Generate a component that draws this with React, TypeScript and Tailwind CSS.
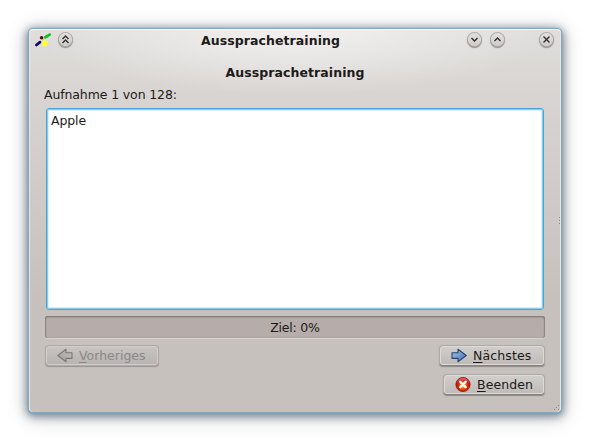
import type { ReactNode } from "react";

function RoundButton({ children, label }: { children: ReactNode; label: string }) {
  return (
    <button
      aria-label={label}
      className="flex size-[13px] shrink-0 items-center justify-center rounded-full bg-linear-to-b from-[#e3e1df] to-[#cfccc9] shadow-[0_0_0_1px_#b0acaa,0_1px_1px_1px_#8d8986]"
    >
      <svg width="15" height="15" viewBox="0 0 15 15" fill="none" stroke="#302d2c" strokeWidth="1.4" className="shrink-0">
        {children}
      </svg>
    </button>
  );
}

function AppIcon() {
  return (
    <svg width="18" height="16" viewBox="0 0 18 16" className="shrink-0">
      <path d="M2.4 13 6 10.2" stroke="#090970" strokeWidth="2.8" strokeLinecap="round" />
      <path d="M11.4 5.2 15.6 2.6" stroke="#08c51b" strokeWidth="2.8" strokeLinecap="round" />
      <path d="M8 8.4 11 6" stroke="#c9c558" strokeWidth="1" />
      <circle cx="7.6" cy="5.8" r="1.8" fill="#640812" />
      <path d="M7.8 9.2 10.5 8.3 13.8 9.5 13.4 12.7 11 14.8 8.4 14.2Z" fill="#ffff38" />
    </svg>
  );
}

function Arrow({ disabled = false }: { disabled?: boolean }) {
  return (
    <svg width="16" height="16" viewBox="0 0 16 16" className={disabled ? "shrink-0 -scale-x-100" : "shrink-0"}>
      <defs>
        <linearGradient id={disabled ? "gray" : "blue"} x1="0" y1="0" x2="1" y2="1">
          <stop offset="0" stopColor={disabled ? "#c3c0bd" : "#a7c7ed"} />
          <stop offset="1" stopColor={disabled ? "#a19e9b" : "#3d70af"} />
        </linearGradient>
      </defs>
      <path
        d="M1 4.8H7V1.3L15.2 7.5 7 13.7V10.4H1Z"
        fill={disabled ? "url(#gray)" : "url(#blue)"}
        stroke={disabled ? "#7b7876" : "#29456c"}
        strokeWidth="1.1"
        strokeLinejoin="round"
      />
    </svg>
  );
}

function CloseIcon() {
  return (
    <svg width="16" height="16" viewBox="0 0 16 16" className="shrink-0">
      <defs>
        <linearGradient id="red" x1="0" y1="0" x2="0" y2="1">
          <stop offset="0" stopColor="#df6661" />
          <stop offset=".45" stopColor="#c31c13" />
          <stop offset="1" stopColor="#d62808" />
        </linearGradient>
        <radialGradient id="glow">
          <stop offset="0" stopColor="#f5a024" />
          <stop offset=".5" stopColor="#ea7c1a" />
          <stop offset="1" stopColor="#d64000" stopOpacity="0" />
        </radialGradient>
      </defs>
      <circle cx="8" cy="7.5" r="7.1" fill="url(#red)" stroke="#9b0905" strokeWidth=".8" />
      <circle cx="8" cy="8.5" r="5.5" fill="url(#glow)" />
      <path d="m5.2 4.7 5.6 5.6m0-5.6-5.6 5.6" stroke="#fff" strokeWidth="2.3" strokeLinecap="round" />
    </svg>
  );
}

function PushButton({ icon, mnemonic, rest, className, disabled = false }: {
  icon: ReactNode;
  mnemonic: string;
  rest: string;
  className: string;
  disabled?: boolean;
}) {
  return (
    <button
      disabled={disabled}
      className={`flex h-[19px] items-center rounded-[3px] border bg-linear-to-b pl-[10px] whitespace-nowrap ${disabled ? "border-[#d0cdca] from-[#c8c4c1] to-[#b8b4b1] text-[#8b8886] shadow-[0_0_0_1px_#aeaaa7,0_1px_0_0_#85817e,0_1px_1px_1px_#98948f]" : "border-[#dddbd8] from-[#d0cecb] to-[#bfbbb8] text-[#1d1a19] shadow-[0_1px_0_0_#85807d,0_0_0_1px_#aeaaa7,0_1px_1px_1px_#8d8986]"} ${className}`}
    >
      {icon}
      <span className="ml-[6px] leading-[16px]">
        <span className="underline decoration-1 underline-offset-2">{mnemonic}</span>{rest}
      </span>
    </button>
  );
}

export default function App() {
  return (
    <main className="h-[441px] w-[590px] overflow-hidden bg-white pt-[29px] pl-[29px] font-['DejaVu_Sans',sans-serif] text-[12.5px] text-[#1d1a19]">
      <section className="relative flex h-[383px] w-[532px] flex-col rounded-[4px] border-x border-t border-x-[#e7e5e3] border-t-[#fafafa] bg-[radial-gradient(ellipse_260px_64px_at_50%_0px,#f2f1f0_0%,#f2f1f000_100%),linear-gradient(to_bottom,#dfdedc_0px,#d8d4d1_64px,#c6c1bd_270px,#c6c1bd_100%)] shadow-[0_0_0_1px_#84a9bc,0_1px_2px_1px_#70a9c5,0_2px_8px_2px_#78818d,0_3px_19px_3px_#c4c6c9]">
        <header className="flex h-[20px] items-center pl-[4px]">
          <AppIcon />
          <div className="-mt-px ml-[7px]">
            <RoundButton label="Einrollen"><path d="m4.5 7 3-3 3 3m-6 4 3-3 3 3" /></RoundButton>
          </div>
          <h1 className="flex-1 pt-[2px] pl-px text-center font-bold tracking-[0.08px] whitespace-nowrap">Aussprachetraining</h1>
          <div className="-mt-px flex gap-[10px]">
            <RoundButton label="Minimieren"><path d="m4.5 6 3 3 3-3" /></RoundButton>
            <RoundButton label="Maximieren"><path d="m4.5 9 3-3 3 3" /></RoundButton>
          </div>
          <div className="-mt-px mr-[7px] ml-[36px]">
            <RoundButton label="Schließen"><path d="m4.5 4.5 6 6m0-6-6 6" /></RoundButton>
          </div>
        </header>

        <div className="flex flex-col px-[15px]">
          <h2 className="mt-[13px] h-[20px] text-center leading-[20px] font-bold tracking-[0.08px]">Aussprachetraining</h2>
          <p className="mt-[4px] -ml-px h-[16px] leading-[16px] tracking-[-0.12px]">Aufnahme 1 von 128:</p>
          <div className="mt-[5px] ml-px h-[202px] w-[498px] rounded-[3px] border border-[#45a5d6] bg-white px-[4px] pt-[3px] leading-[18px] tracking-[-0.1px] shadow-[inset_0_0_0_1px_#8bcceb,inset_0_0_1px_2px_#d9effa]">Apple</div>
          <div className="mt-[6px] flex h-[22px] items-center justify-center rounded-[3px] bg-[#b6acaa] pt-[3px] tracking-[-0.2px] shadow-[0_1px_0_#d9d6d3,inset_0_1px_2px_#777170,inset_1px_0_1px_#918b88,inset_-1px_0_1px_#918b88]">Ziel: 0%</div>
          <div className="mt-[8px] flex justify-between px-px">
            <PushButton disabled className="w-[112px]" icon={<Arrow disabled />} mnemonic="V" rest="orheriges" />
            <PushButton className="w-[104px] tracking-[0.12px]" icon={<Arrow />} mnemonic="N" rest="ächstes" />
          </div>
          <div className="mt-[10px] flex justify-end pr-px">
            <PushButton className="w-[100px] tracking-[0.1px]" icon={<CloseIcon />} mnemonic="B" rest="eenden" />
          </div>
        </div>

        <svg width="4" height="9" className="absolute top-[187px] right-[-2px]" viewBox="0 0 4 9" fill="#8c8784">
          <path d="M1 0h1v1H1zm0 3h1v1H1zm0 3h1v1H1z" />
        </svg>
        <svg width="7" height="7" className="absolute right-0 bottom-0" viewBox="0 0 7 7" fill="#8c8784">
          <path d="M5 0h1v1H5zM3 2h1v1H3zM1 4h1v1H1zm4 0h1v1H5z" />
        </svg>
      </section>
    </main>
  );
}
